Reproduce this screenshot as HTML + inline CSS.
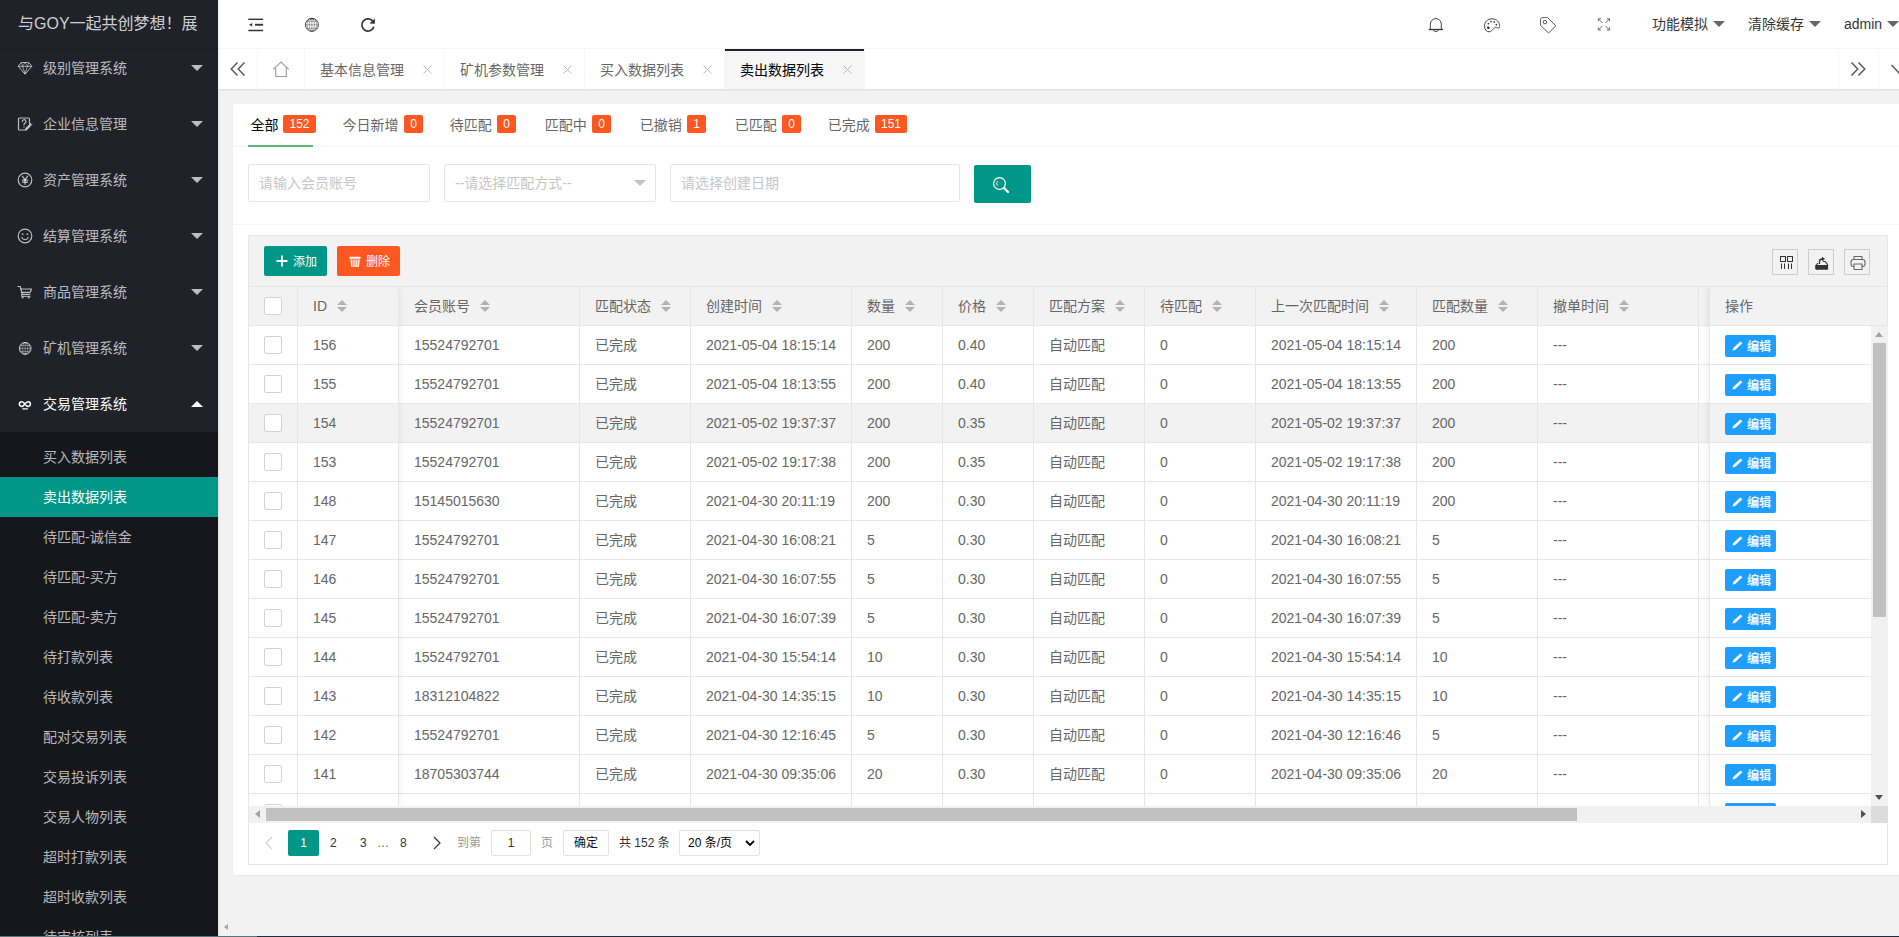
<!DOCTYPE html><html lang="zh-CN"><head><meta charset="utf-8"><title>卖出数据列表</title><style>

*{box-sizing:border-box;margin:0;padding:0}
html,body{width:1899px;height:937px;overflow:hidden}
body{position:relative;background:#f2f2f2;font-family:"Liberation Sans","Noto Sans CJK SC",sans-serif;font-size:14px;color:#666;line-height:24px}
.abs{position:absolute}
svg{display:block}
/* sidebar */
#side{position:absolute;left:0;top:0;width:218px;height:937px;background:#20222a;overflow:hidden;z-index:5;box-shadow:1px 0 2px 0 rgba(0,0,0,.08)}
#logo{position:absolute;left:0;top:0;width:218px;height:48px;background:#20222a;box-shadow:0 1px 2px 0 rgba(0,0,0,.15);z-index:3;color:rgba(255,255,255,.8);font-size:16px;line-height:48px;padding-left:18px;white-space:nowrap;overflow:hidden}
.mi{position:absolute;left:0;width:218px;height:56px;line-height:56px;color:rgba(255,255,255,.7);font-size:14px;white-space:nowrap}
.mi .ic{position:absolute;left:17px;top:20px;width:16px;height:16px}
.mi .tx{position:absolute;left:43px;top:0}
.mi .ar{position:absolute;left:191px;top:25px;width:0;height:0;border:6px solid transparent;border-top-color:rgba(255,255,255,.7)}
.mi.open{color:#fff}
.mi.open .ar{top:19px;border-top-color:transparent;border-bottom-color:#fff}
#sub{position:absolute;left:0;top:432px;width:218px;height:600px;background:rgba(0,0,0,.3)}
.si{position:absolute;left:0;width:218px;height:40px;line-height:40px;padding-left:43px;color:rgba(255,255,255,.7);font-size:14px;white-space:nowrap}
.si.on{background:#009688;color:#fff}
/* header */
#hd{position:absolute;left:218px;top:0;width:1701px;height:49px;background:#fff;border-bottom:1px solid #f6f6f6;z-index:4}
#hd .hi{position:absolute;top:0}
.ht{position:absolute;top:0;height:48px;line-height:48px;font-size:14px;color:#333;white-space:nowrap}
.ha{position:absolute;top:21px;width:0;height:0;border:6px solid transparent;border-top-color:#666}
/* tabs */
#tabs{position:absolute;left:218px;top:49px;width:1701px;height:40px;background:#fff;box-shadow:0 1px 2px 0 rgba(0,0,0,.1);z-index:3}
.tb{position:absolute;top:0;height:40px;line-height:40px;border-right:1px solid #f6f6f6;font-size:14px;color:#666;white-space:nowrap}
.tb .tt{position:absolute;left:15px;top:1px}
.tb .cl{position:absolute;left:118px;top:16px;width:9px;height:9px}
.tb.on{background:#f6f6f6;color:#000}
.tb.on:before{content:"";position:absolute;left:0;top:0;width:100%;height:2px;background:#20222a}
.tctl{position:absolute;top:0;width:40px;height:40px;background:#fff}


#card{position:absolute;left:233px;top:104px;width:1700px;height:771px;background:#fff;border-radius:2px;box-shadow:0 1px 2px 0 rgba(0,0,0,.05)}
.ln{position:absolute;left:233px;width:1700px;height:1px;background:#f6f6f6}
.ft{position:absolute;top:105px;height:41px;line-height:41px;font-size:14px;color:#666;white-space:nowrap}
.ft.on{color:#000}
.bd{position:absolute;top:115px;height:18px;line-height:18px;font-size:12px;color:#fff;background:#ff5722;border-radius:2px;text-align:center}
.inp{position:absolute;top:164px;height:38px;border:1px solid #e6e6e6;border-radius:2px;background:#fff;line-height:36px;padding-left:10px;color:#c6c6c6;font-size:14px;white-space:nowrap}
#tv{position:absolute;left:248px;top:235px;width:1640px;height:630px;border:1px solid #e6e6e6;border-right:none;background:#fff;overflow:hidden}
.rb{position:absolute;left:1638px;width:1px;background:#e6e6e6;z-index:6}
#tool{position:absolute;left:0;top:0;width:1638px;height:51px;background:#f2f2f2;border-bottom:1px solid #e6e6e6}
.btn{position:absolute;top:10px;height:30px;line-height:30px;width:63px;border-radius:2px;color:#fff;font-size:12px;white-space:nowrap}
.tbx{position:absolute;top:13px;width:26px;height:26px;border:1px solid #ccc;color:#333}
.row{position:absolute;left:0;height:39px;width:1700px;display:flex;white-space:nowrap}
.c{flex:none;height:39px;border-right:1px solid #e6e6e6;border-bottom:1px solid #e6e6e6;padding-left:15px;line-height:38px;font-size:14px;color:#666;overflow:hidden;position:relative}
.hd .c{background:#f2f2f2}
.row.hv .c{background:#f2f2f2}
.cb{position:absolute;left:15px;top:10px;width:18px;height:18px;border:1px solid #d2d2d2;border-radius:2px;background:#fff}
.so{display:inline-block;position:relative;width:10px;height:20px;margin-left:10px;vertical-align:middle;top:0}
.so:before,.so:after{content:"";position:absolute;left:0;width:0;height:0;border:5px solid transparent}
.so:before{top:-2px;border-bottom-color:#b2b2b2}
.so:after{top:10px;border-top-color:#b2b2b2}
#fr{position:absolute;left:1460px;top:51px;width:179px;height:519px;border-left:1px solid #e6e6e6;box-shadow:-1px 0 8px rgba(0,0,0,.08);background:#fff;clip-path:inset(0 0 0 -12px)}
#fl{position:absolute;left:0;top:51px;width:150px;height:519px;box-shadow:0 -1px 8px rgba(0,0,0,.08);pointer-events:none;clip-path:inset(0 -12px 0 0)}
.fc{position:absolute;left:0;height:39px;border-bottom:1px solid #e6e6e6;background:#fff}
.eb{position:absolute;left:15px;top:9px;width:51px;height:22px;line-height:22px;background:#1e9fff;border-radius:2px;color:#fff;font-size:12px;white-space:nowrap}
.pg{position:absolute;top:595px;height:26px;line-height:26px;font-size:12px;color:#333;white-space:nowrap}

</style></head><body>
<div id="side">
<div class="mi" style="top:40px"><span class="ic"><svg width="16" height="16" viewBox="0 0 16 16" fill="none" stroke="currentColor" stroke-width="1" stroke-linejoin="round"><path d="M4.200 2.600h7.600l3 3.700L8 14.200 1.200 6.300z"/><path d="M1.500 6.300h13" stroke-width=".9"/><path d="M5.600 6.300 8 13.600l2.400-7.300" stroke-width=".8"/><path d="M4.200 2.600l1.400 3.700L8 2.600l2.400 3.700 1.400-3.700" stroke-width=".7" stroke-opacity=".8"/></svg></span><span class="tx">级别管理系统</span><i class="ar"></i></div>
<div class="mi" style="top:96px"><span class="ic"><svg width="16" height="16" viewBox="0 0 16 16" fill="none" stroke="currentColor" stroke-width="1.2" stroke-linecap="round" stroke-linejoin="round" ><path d="M9 14H2.5a1 1 0 0 1-1-1V3a1 1 0 0 1 1-1h9a1 1 0 0 1 1 1v4.5"/><path d="M5.2 5.6a1.9 1.9 0 1 1 2.6 1.8c-.6.3-.8.7-.8 1.4"/><path d="M7 10.9v.2"/><path d="M14.6 8.8l-4.4 4.6-1.6.5.4-1.7 4.4-4.6z" fill="currentColor" stroke-width=".8"/></svg></span><span class="tx">企业信息管理</span><i class="ar"></i></div>
<div class="mi" style="top:152px"><span class="ic"><svg width="16" height="16" viewBox="0 0 16 16" fill="none" stroke="currentColor" stroke-width="1.2" stroke-linecap="round" stroke-linejoin="round" ><circle cx="8" cy="8" r="6.8"/><path d="M5.4 4.2 8 7.8l2.6-3.6"/><path d="M8 7.8v4.4"/><path d="M5.4 8.2h5.2"/><path d="M5.4 10.2h5.2"/></svg></span><span class="tx">资产管理系统</span><i class="ar"></i></div>
<div class="mi" style="top:208px"><span class="ic"><svg width="16" height="16" viewBox="0 0 16 16" fill="none" stroke="currentColor" stroke-width="1.2" stroke-linecap="round" stroke-linejoin="round" ><circle cx="8" cy="8" r="6.8"/><path d="M4.8 9.4a3.4 3.4 0 0 0 6.4 0"/><circle cx="5.6" cy="6.2" r=".9" fill="currentColor" stroke="none"/><circle cx="10.4" cy="6.2" r=".9" fill="currentColor" stroke="none"/></svg></span><span class="tx">结算管理系统</span><i class="ar"></i></div>
<div class="mi" style="top:264px"><span class="ic"><svg width="16" height="16" viewBox="0 0 16 16" fill="none" stroke="currentColor" stroke-width="1.2" stroke-linecap="round" stroke-linejoin="round" ><path d="M1 2.5h2.2l2 7.8h7.6"/><path d="M4 5h10.5l-1.3 3.4H5"/><path d="M5.2 10.3l-.8 2h8.8" stroke-width="1"/><circle cx="5.6" cy="13.6" r="1" fill="currentColor" stroke="none"/><circle cx="11.8" cy="13.6" r="1" fill="currentColor" stroke="none"/></svg></span><span class="tx">商品管理系统</span><i class="ar"></i></div>
<div class="mi" style="top:320px"><span class="ic"><svg width="16" height="17" viewBox="0 0 16 17" fill="none" stroke="currentColor"><circle cx="8.200" cy="8.400" r="5.900" stroke-width="1"/><g stroke-width=".7" stroke-opacity=".75"><ellipse cx="8.200" cy="8.400" rx="2.500" ry="5.900"/><path d="M8.200 2.500v11.800"/><path d="M2.300 8.400h11.800"/><path d="M3.200 5.400h10"/><path d="M3.200 11.400h10"/><ellipse cx="8.200" cy="8.400" rx="4.600" ry="5.900" stroke-opacity=".6"/></g></svg></span><span class="tx">矿机管理系统</span><i class="ar"></i></div>
<div class="mi open" style="top:376px"><span class="ic"><svg width="16" height="16" viewBox="0 0 16 16" fill="none" stroke="currentColor" stroke-linecap="round"><path d="M7.900 8C6.900 6.600 5.900 5.800 4.700 5.800a2.300 2.300 0 0 0 0 4.600C5.900 10.400 6.900 9.500 7.900 8s2.100-2.200 3.200-2.200a2.300 2.300 0 0 1 0 4.600c-.8 0-1.500-.4-2.100-1" stroke-width="1.500"/><path d="M5.800 12.900h4.600" stroke-width="1.100"/></svg></span><span class="tx">交易管理系统</span><i class="ar"></i></div>
<div id="sub">
<div class="si" style="top:5px">买入数据列表</div>
<div class="si on" style="top:45px">卖出数据列表</div>
<div class="si" style="top:85px">待匹配-诚信金</div>
<div class="si" style="top:125px">待匹配-买方</div>
<div class="si" style="top:165px">待匹配-卖方</div>
<div class="si" style="top:205px">待打款列表</div>
<div class="si" style="top:245px">待收款列表</div>
<div class="si" style="top:285px">配对交易列表</div>
<div class="si" style="top:325px">交易投诉列表</div>
<div class="si" style="top:365px">交易人物列表</div>
<div class="si" style="top:405px">超时打款列表</div>
<div class="si" style="top:445px">超时收款列表</div>
<div class="si" style="top:485px">待审核列表</div>
</div>
<div id="logo">与GOY一起共创梦想！展</div>
</div>
<div id="hd">
<span class="hi" style="left:30px;top:17px"><svg width="16" height="16" viewBox="0 0 16 16" fill="none" stroke="#333"><path d="M.3 2.300h14.800" stroke-width="1.400"/><path d="M7 7.750h8.100" stroke-width="1.900"/><path d="M.3 13.500h14.800" stroke-width="1.500"/><path d="M4.200 5.900v3.700L1 7.750z" fill="#333" stroke="none"/></svg></span>
<span class="hi" style="left:86px;top:17px"><svg width="16" height="16" viewBox="0 0 16 16" fill="none" stroke="#333"><circle cx="7.900" cy="7.800" r="6.500" stroke-width="1" stroke-opacity=".85"/><g stroke-width=".7" stroke-opacity=".6"><ellipse cx="7.900" cy="7.800" rx="2.600" ry="6.500"/><ellipse cx="7.900" cy="7.800" rx="4.900" ry="6.500"/><path d="M7.900 1.300v13"/><path d="M1.400 7.800h13"/><path d="M2.600 4.300h10.600"/><path d="M2.600 11.300h10.600"/></g><path d="M5.800 1.900h4.200" stroke-width="1" stroke-opacity=".8"/></svg></span>
<span class="hi" style="left:142px;top:17px"><svg width="16" height="16" viewBox="0 0 16 16" fill="none" stroke="#333"><path d="M13.610 10.380A6.100 6.100 0 1 1 12.240 3.610" stroke-width="1.700" stroke-linecap="round"/><path d="M14.900 1.500v5.250L9.400 6.600z" fill="#333" stroke="none"/></svg></span>
<span class="hi" style="left:1210px;top:17px"><svg width="16" height="16" viewBox="0 0 16 16" fill="none" stroke="#444" stroke-width="1"><path d="M.7 12.500h14.200" stroke="#333" stroke-width="1.300"/><path d="M2.300 12.500V7.200a5.500 5.600 0 0 1 11 0v5.300"/><path d="M7.800 1.600V.8"/><path d="M5.300 12.900a2.600 2.400 0 0 0 5 0"/></svg></span>
<span class="hi" style="left:1266px;top:17px"><svg width="16" height="16" viewBox="0 0 16 16" fill="none" stroke="#444" stroke-width="1"><path d="M8 1.800C3.500 1.800.5 5.200.5 9c0 3.500 2.200 5.800 4.600 5.800 2.200 0 3-1.800 4.500-3.300 1.300-1.300 2.700-1.500 3.900-.7 1.300.8 2.300.2 2.300-1.500C15.800 5.200 12.500 1.800 8 1.800z"/><circle cx="4.300" cy="10.700" r="1.250" fill="#222" stroke="none"/><circle cx="4.400" cy="6.600" r=".85" fill="#333" stroke="none"/><circle cx="7" cy="4.500" r=".85" fill="#333" stroke="none"/><circle cx="10.300" cy="4.900" r=".85" fill="#333" stroke="none"/><circle cx="12.400" cy="7.700" r=".85" fill="#333" stroke="none"/></svg></span>
<span class="hi" style="left:1322px;top:17px"><svg width="17" height="17" viewBox="0 0 17 17" fill="none" stroke="#555" stroke-width="1" stroke-linejoin="round"><path d="M.5 2.300 1.900.5 7.200.2l8.600 8.600L8.600 16 .3 8.200z"/><circle cx="4.900" cy="5.100" r="1.700"/></svg></span>
<span class="hi" style="left:1378px;top:16px"><svg width="16" height="16" viewBox="0 0 16 16" fill="none" stroke="#666" stroke-width=".95"><path d="M2.300 5.400V2.800H4.900"/><path d="M2.300 2.800l4.200 4.200"/><path d="M10.900 2.800h2.600v2.600"/><path d="M13.500 2.800 9.300 7"/><path d="M2.300 11.400v2.600H4.900"/><path d="M2.300 14l4.200-4.200"/><path d="M10.900 14h2.600v-2.600"/><path d="M13.500 14 9.300 9.800"/></svg></span>
<span class="ht" style="left:1434px">功能模拟</span><i class="ha" style="left:1495px"></i>
<span class="ht" style="left:1530px">清除缓存</span><i class="ha" style="left:1591px"></i>
<span class="ht" style="left:1626px">admin</span><i class="ha" style="left:1669px"></i>
</div>
<div id="tabs">
<div class="tctl" style="left:0;border-right:1px solid #f6f6f6"><svg class="abs" style="left:11px;top:12px" width="18" height="16" viewBox="0 0 18 16" fill="none" stroke="#555" stroke-width="1.4"><path d="M8.500 1.500 2.200 8l6.300 6.500"/><path d="M15.500 1.500 9.200 8l6.300 6.500"/></svg></div>
<div class="tb" style="left:40px;width:47px"><svg class="abs" style="left:14px;top:12px" width="18" height="17" viewBox="0 0 18 17" fill="none" stroke="#999" stroke-width="1.1" stroke-linejoin="round"><path d="M1.200 8.400 9 1.200l7.800 7.200"/><path d="M3.700 6.800v8.700h10.600V6.800"/></svg></div>
<div class="tb" style="left:87px;width:140px"><span class="tt">基本信息管理</span><svg class="cl" viewBox="0 0 9 9" stroke="#bbb" stroke-width="1"><path d="M.5.5l8 8M8.500.5l-8 8"/></svg></div>
<div class="tb" style="left:227px;width:140px"><span class="tt">矿机参数管理</span><svg class="cl" viewBox="0 0 9 9" stroke="#bbb" stroke-width="1"><path d="M.5.5l8 8M8.500.5l-8 8"/></svg></div>
<div class="tb" style="left:367px;width:140px"><span class="tt">买入数据列表</span><svg class="cl" viewBox="0 0 9 9" stroke="#bbb" stroke-width="1"><path d="M.5.5l8 8M8.500.5l-8 8"/></svg></div>
<div class="tb on" style="left:507px;width:140px"><span class="tt">卖出数据列表</span><svg class="cl" viewBox="0 0 9 9" stroke="#bbb" stroke-width="1"><path d="M.5.5l8 8M8.500.5l-8 8"/></svg></div>
<div class="tctl" style="left:1620px;border-left:1px solid #f6f6f6"><svg class="abs" style="left:10px;top:12px" width="18" height="16" viewBox="0 0 18 16" fill="none" stroke="#555" stroke-width="1.4"><path d="M2.500 1.500 8.800 8l-6.300 6.500"/><path d="M9.500 1.500 15.800 8l-6.300 6.500"/></svg></div>
<div class="tctl" style="left:1660px;border-left:1px solid #f6f6f6"><svg class="abs" style="left:11px;top:14px" width="18" height="12" viewBox="0 0 18 12" fill="none" stroke="#555" stroke-width="1.4"><path d="M1.500 2 9 10l7.500-8"/></svg></div>
</div>
<div id="card"></div>
<div class="ln" style="top:146px"></div>
<div class="ln" style="top:224px"></div>
<span class="ft on" style="left:250.5px">全部</span><span class="bd" style="left:283px;width:33px">152</span>
<span class="ft" style="left:342.6px">今日新增</span><span class="bd" style="left:404px;width:19px">0</span>
<span class="ft" style="left:449.8px">待匹配</span><span class="bd" style="left:497px;width:19px">0</span>
<span class="ft" style="left:544.8px">匹配中</span><span class="bd" style="left:592px;width:19px">0</span>
<span class="ft" style="left:639.8px">已撤销</span><span class="bd" style="left:687px;width:19px">1</span>
<span class="ft" style="left:734.8px">已匹配</span><span class="bd" style="left:782px;width:19px">0</span>
<span class="ft" style="left:827.8px">已完成</span><span class="bd" style="left:875px;width:32px">151</span>
<div class="abs" style="left:248px;top:145px;width:65px;height:2px;background:#5fb878"></div>
<div class="inp" style="left:248px;width:182px">请输入会员账号</div>
<div class="inp" style="left:444px;width:212px">--请选择匹配方式--<i class="abs" style="right:9px;top:15px;border:6px solid transparent;border-top-color:#c2c2c2"></i></div>
<div class="inp" style="left:670px;width:290px">请选择创建日期</div>
<div class="abs" style="left:974px;top:165px;width:57px;height:38px;background:#009688;border-radius:2px"><svg class="abs" style="left:18px;top:11px" width="18" height="18" viewBox="0 0 18 18" fill="none" stroke="#fff" stroke-width="1.250" stroke-linecap="round"><circle cx="7.500" cy="7.500" r="5.900"/><path d="M12 12l4 4" stroke-width="2.400"/><path d="M5.200 9.300a3 3 0 0 1 0-3.600" stroke-width="1"/></svg></div>
<div id="tv">
<div id="tool">
<div class="btn" style="left:15px;background:#009688"><svg class="abs" style="left:12px;top:9px" width="12" height="12" viewBox="0 0 12 12" stroke="#fff" stroke-width="1.800"><path d="M6 .5v11M.5 6h11"/></svg><span class="abs" style="left:29px;top:1px">添加</span></div>
<div class="btn" style="left:88px;background:#ff5722"><svg class="abs" style="left:12px;top:9px" width="12" height="13" viewBox="0 0 12 13" fill="none" stroke="#fff" stroke-linecap="round"><path d="M1.200 2.700h9.600" stroke-width="1.900"/><path d="M2 4.600l.5 6.700h7l.5-6.700" stroke-width="1.100" fill="#fff" fill-opacity=".35"/><path d="M4.300 5v5.800M6 5v5.800M7.700 5v5.800" stroke-width=".8" stroke-opacity=".9"/></svg><span class="abs" style="left:29px;top:1px">删除</span></div>
<div class="tbx" style="left:1523px"><svg class="abs" style="left:7px;top:6px" width="14" height="14" viewBox="0 0 14 14" fill="none" stroke="#333" stroke-width="1"><rect x=".5" y=".5" width="5" height="5"/><rect x="7.500" y=".5" width="5" height="5"/><path d="M1.500 7.500V13M4.500 7.500V13M8.500 7.500V13M11.500 7.500V13"/></svg></div>
<div class="tbx" style="left:1559px"><svg class="abs" style="left:6px;top:6px" width="14" height="14" viewBox="0 0 14 14" fill="none" stroke="#333" stroke-width="1.100"><path d="M1 13h11.500V8.500L10 5.500H8"/><path d="M1 13V9.500l2-2.500" /><path d="M1 9.500h11.500v3.500H1z" fill="#333"/><path d="M4.500 8V5.500C4.500 4 5.500 3 7.500 3" stroke-width="1.300"/><path d="M7 .8 10 3 7 5.200z" fill="#333" stroke="none"/></svg></div>
<div class="tbx" style="left:1595px"><svg class="abs" style="left:5px;top:5px" width="16" height="16" viewBox="0 0 16 16" fill="none" stroke="#666" stroke-width="1.100" stroke-linejoin="round"><path d="M4 4.500V1.500h8v3"/><rect x="1" y="4.500" width="14" height="7" rx="2.500"/><path d="M4 9h8v5.500H4z" fill="#f2f2f2"/></svg></div>
</div>
<div class="row hd" style="top:51px">
<div class="c" style="width:49px"><i class="cb"></i></div>
<div class="c" style="width:101px">ID<i class="so"></i></div>
<div class="c" style="width:181px">会员账号<i class="so"></i></div>
<div class="c" style="width:111px">匹配状态<i class="so"></i></div>
<div class="c" style="width:161px">创建时间<i class="so"></i></div>
<div class="c" style="width:91px">数量<i class="so"></i></div>
<div class="c" style="width:91px">价格<i class="so"></i></div>
<div class="c" style="width:111px">匹配方案<i class="so"></i></div>
<div class="c" style="width:111px">待匹配<i class="so"></i></div>
<div class="c" style="width:161px">上一次匹配时间<i class="so"></i></div>
<div class="c" style="width:121px">匹配数量<i class="so"></i></div>
<div class="c" style="width:161px">撤单时间<i class="so"></i></div>
<div class="c" style="width:200px">备注<i class="so"></i></div>
</div>
<div class="abs" style="left:0;top:90px;width:1622px;height:480px;overflow:hidden">
<div class="row" style="top:0px">
<div class="c" style="width:49px"><i class="cb"></i></div>
<div class="c" style="width:101px">156</div>
<div class="c" style="width:181px">15524792701</div>
<div class="c" style="width:111px">已完成</div>
<div class="c" style="width:161px">2021-05-04 18:15:14</div>
<div class="c" style="width:91px">200</div>
<div class="c" style="width:91px">0.40</div>
<div class="c" style="width:111px">自动匹配</div>
<div class="c" style="width:111px">0</div>
<div class="c" style="width:161px">2021-05-04 18:15:14</div>
<div class="c" style="width:121px">200</div>
<div class="c" style="width:161px">---</div>
<div class="c" style="width:200px"></div>
</div>
<div class="row" style="top:39px">
<div class="c" style="width:49px"><i class="cb"></i></div>
<div class="c" style="width:101px">155</div>
<div class="c" style="width:181px">15524792701</div>
<div class="c" style="width:111px">已完成</div>
<div class="c" style="width:161px">2021-05-04 18:13:55</div>
<div class="c" style="width:91px">200</div>
<div class="c" style="width:91px">0.40</div>
<div class="c" style="width:111px">自动匹配</div>
<div class="c" style="width:111px">0</div>
<div class="c" style="width:161px">2021-05-04 18:13:55</div>
<div class="c" style="width:121px">200</div>
<div class="c" style="width:161px">---</div>
<div class="c" style="width:200px"></div>
</div>
<div class="row hv" style="top:78px">
<div class="c" style="width:49px"><i class="cb"></i></div>
<div class="c" style="width:101px">154</div>
<div class="c" style="width:181px">15524792701</div>
<div class="c" style="width:111px">已完成</div>
<div class="c" style="width:161px">2021-05-02 19:37:37</div>
<div class="c" style="width:91px">200</div>
<div class="c" style="width:91px">0.35</div>
<div class="c" style="width:111px">自动匹配</div>
<div class="c" style="width:111px">0</div>
<div class="c" style="width:161px">2021-05-02 19:37:37</div>
<div class="c" style="width:121px">200</div>
<div class="c" style="width:161px">---</div>
<div class="c" style="width:200px"></div>
</div>
<div class="row" style="top:117px">
<div class="c" style="width:49px"><i class="cb"></i></div>
<div class="c" style="width:101px">153</div>
<div class="c" style="width:181px">15524792701</div>
<div class="c" style="width:111px">已完成</div>
<div class="c" style="width:161px">2021-05-02 19:17:38</div>
<div class="c" style="width:91px">200</div>
<div class="c" style="width:91px">0.35</div>
<div class="c" style="width:111px">自动匹配</div>
<div class="c" style="width:111px">0</div>
<div class="c" style="width:161px">2021-05-02 19:17:38</div>
<div class="c" style="width:121px">200</div>
<div class="c" style="width:161px">---</div>
<div class="c" style="width:200px"></div>
</div>
<div class="row" style="top:156px">
<div class="c" style="width:49px"><i class="cb"></i></div>
<div class="c" style="width:101px">148</div>
<div class="c" style="width:181px">15145015630</div>
<div class="c" style="width:111px">已完成</div>
<div class="c" style="width:161px">2021-04-30 20:11:19</div>
<div class="c" style="width:91px">200</div>
<div class="c" style="width:91px">0.30</div>
<div class="c" style="width:111px">自动匹配</div>
<div class="c" style="width:111px">0</div>
<div class="c" style="width:161px">2021-04-30 20:11:19</div>
<div class="c" style="width:121px">200</div>
<div class="c" style="width:161px">---</div>
<div class="c" style="width:200px"></div>
</div>
<div class="row" style="top:195px">
<div class="c" style="width:49px"><i class="cb"></i></div>
<div class="c" style="width:101px">147</div>
<div class="c" style="width:181px">15524792701</div>
<div class="c" style="width:111px">已完成</div>
<div class="c" style="width:161px">2021-04-30 16:08:21</div>
<div class="c" style="width:91px">5</div>
<div class="c" style="width:91px">0.30</div>
<div class="c" style="width:111px">自动匹配</div>
<div class="c" style="width:111px">0</div>
<div class="c" style="width:161px">2021-04-30 16:08:21</div>
<div class="c" style="width:121px">5</div>
<div class="c" style="width:161px">---</div>
<div class="c" style="width:200px"></div>
</div>
<div class="row" style="top:234px">
<div class="c" style="width:49px"><i class="cb"></i></div>
<div class="c" style="width:101px">146</div>
<div class="c" style="width:181px">15524792701</div>
<div class="c" style="width:111px">已完成</div>
<div class="c" style="width:161px">2021-04-30 16:07:55</div>
<div class="c" style="width:91px">5</div>
<div class="c" style="width:91px">0.30</div>
<div class="c" style="width:111px">自动匹配</div>
<div class="c" style="width:111px">0</div>
<div class="c" style="width:161px">2021-04-30 16:07:55</div>
<div class="c" style="width:121px">5</div>
<div class="c" style="width:161px">---</div>
<div class="c" style="width:200px"></div>
</div>
<div class="row" style="top:273px">
<div class="c" style="width:49px"><i class="cb"></i></div>
<div class="c" style="width:101px">145</div>
<div class="c" style="width:181px">15524792701</div>
<div class="c" style="width:111px">已完成</div>
<div class="c" style="width:161px">2021-04-30 16:07:39</div>
<div class="c" style="width:91px">5</div>
<div class="c" style="width:91px">0.30</div>
<div class="c" style="width:111px">自动匹配</div>
<div class="c" style="width:111px">0</div>
<div class="c" style="width:161px">2021-04-30 16:07:39</div>
<div class="c" style="width:121px">5</div>
<div class="c" style="width:161px">---</div>
<div class="c" style="width:200px"></div>
</div>
<div class="row" style="top:312px">
<div class="c" style="width:49px"><i class="cb"></i></div>
<div class="c" style="width:101px">144</div>
<div class="c" style="width:181px">15524792701</div>
<div class="c" style="width:111px">已完成</div>
<div class="c" style="width:161px">2021-04-30 15:54:14</div>
<div class="c" style="width:91px">10</div>
<div class="c" style="width:91px">0.30</div>
<div class="c" style="width:111px">自动匹配</div>
<div class="c" style="width:111px">0</div>
<div class="c" style="width:161px">2021-04-30 15:54:14</div>
<div class="c" style="width:121px">10</div>
<div class="c" style="width:161px">---</div>
<div class="c" style="width:200px"></div>
</div>
<div class="row" style="top:351px">
<div class="c" style="width:49px"><i class="cb"></i></div>
<div class="c" style="width:101px">143</div>
<div class="c" style="width:181px">18312104822</div>
<div class="c" style="width:111px">已完成</div>
<div class="c" style="width:161px">2021-04-30 14:35:15</div>
<div class="c" style="width:91px">10</div>
<div class="c" style="width:91px">0.30</div>
<div class="c" style="width:111px">自动匹配</div>
<div class="c" style="width:111px">0</div>
<div class="c" style="width:161px">2021-04-30 14:35:15</div>
<div class="c" style="width:121px">10</div>
<div class="c" style="width:161px">---</div>
<div class="c" style="width:200px"></div>
</div>
<div class="row" style="top:390px">
<div class="c" style="width:49px"><i class="cb"></i></div>
<div class="c" style="width:101px">142</div>
<div class="c" style="width:181px">15524792701</div>
<div class="c" style="width:111px">已完成</div>
<div class="c" style="width:161px">2021-04-30 12:16:45</div>
<div class="c" style="width:91px">5</div>
<div class="c" style="width:91px">0.30</div>
<div class="c" style="width:111px">自动匹配</div>
<div class="c" style="width:111px">0</div>
<div class="c" style="width:161px">2021-04-30 12:16:46</div>
<div class="c" style="width:121px">5</div>
<div class="c" style="width:161px">---</div>
<div class="c" style="width:200px"></div>
</div>
<div class="row" style="top:429px">
<div class="c" style="width:49px"><i class="cb"></i></div>
<div class="c" style="width:101px">141</div>
<div class="c" style="width:181px">18705303744</div>
<div class="c" style="width:111px">已完成</div>
<div class="c" style="width:161px">2021-04-30 09:35:06</div>
<div class="c" style="width:91px">20</div>
<div class="c" style="width:91px">0.30</div>
<div class="c" style="width:111px">自动匹配</div>
<div class="c" style="width:111px">0</div>
<div class="c" style="width:161px">2021-04-30 09:35:06</div>
<div class="c" style="width:121px">20</div>
<div class="c" style="width:161px">---</div>
<div class="c" style="width:200px"></div>
</div>
<div class="row" style="top:468px">
<div class="c" style="width:49px"><i class="cb"></i></div>
<div class="c" style="width:101px">140</div>
<div class="c" style="width:181px">15524792701</div>
<div class="c" style="width:111px">已完成</div>
<div class="c" style="width:161px">2021-04-30 09:30:12</div>
<div class="c" style="width:91px">5</div>
<div class="c" style="width:91px">0.30</div>
<div class="c" style="width:111px">自动匹配</div>
<div class="c" style="width:111px">0</div>
<div class="c" style="width:161px">2021-04-30 09:30:12</div>
<div class="c" style="width:121px">5</div>
<div class="c" style="width:161px">---</div>
<div class="c" style="width:200px"></div>
</div>
</div>
<div id="fl"></div>
<div id="fr">
<div class="fc" style="top:0;width:177px;background:#f2f2f2;padding-left:15px;line-height:38px;color:#666">操作</div>
<div class="abs" style="left:0;top:39px;width:161px;height:480px;overflow:hidden">
<div class="fc" style="top:0px;width:161px"><div class="eb"><svg class="abs" style="left:7px;top:6px" width="11" height="10" viewBox="0 0 11 10"><path d="M8.400.4 10.400 2.300 3.200 8.900.5 9.500 1.200 7z" fill="#fff"/></svg><span class="abs" style="left:22px;top:1px;-webkit-text-stroke:.25px #fff">编辑</span></div></div>
<div class="fc" style="top:39px;width:161px"><div class="eb"><svg class="abs" style="left:7px;top:6px" width="11" height="10" viewBox="0 0 11 10"><path d="M8.400.4 10.400 2.300 3.200 8.900.5 9.500 1.200 7z" fill="#fff"/></svg><span class="abs" style="left:22px;top:1px;-webkit-text-stroke:.25px #fff">编辑</span></div></div>
<div class="fc" style="top:78px;width:161px;background:#f2f2f2"><div class="eb"><svg class="abs" style="left:7px;top:6px" width="11" height="10" viewBox="0 0 11 10"><path d="M8.400.4 10.400 2.300 3.200 8.900.5 9.500 1.200 7z" fill="#fff"/></svg><span class="abs" style="left:22px;top:1px;-webkit-text-stroke:.25px #fff">编辑</span></div></div>
<div class="fc" style="top:117px;width:161px"><div class="eb"><svg class="abs" style="left:7px;top:6px" width="11" height="10" viewBox="0 0 11 10"><path d="M8.400.4 10.400 2.300 3.200 8.900.5 9.500 1.200 7z" fill="#fff"/></svg><span class="abs" style="left:22px;top:1px;-webkit-text-stroke:.25px #fff">编辑</span></div></div>
<div class="fc" style="top:156px;width:161px"><div class="eb"><svg class="abs" style="left:7px;top:6px" width="11" height="10" viewBox="0 0 11 10"><path d="M8.400.4 10.400 2.300 3.200 8.900.5 9.500 1.200 7z" fill="#fff"/></svg><span class="abs" style="left:22px;top:1px;-webkit-text-stroke:.25px #fff">编辑</span></div></div>
<div class="fc" style="top:195px;width:161px"><div class="eb"><svg class="abs" style="left:7px;top:6px" width="11" height="10" viewBox="0 0 11 10"><path d="M8.400.4 10.400 2.300 3.200 8.900.5 9.500 1.200 7z" fill="#fff"/></svg><span class="abs" style="left:22px;top:1px;-webkit-text-stroke:.25px #fff">编辑</span></div></div>
<div class="fc" style="top:234px;width:161px"><div class="eb"><svg class="abs" style="left:7px;top:6px" width="11" height="10" viewBox="0 0 11 10"><path d="M8.400.4 10.400 2.300 3.200 8.900.5 9.500 1.200 7z" fill="#fff"/></svg><span class="abs" style="left:22px;top:1px;-webkit-text-stroke:.25px #fff">编辑</span></div></div>
<div class="fc" style="top:273px;width:161px"><div class="eb"><svg class="abs" style="left:7px;top:6px" width="11" height="10" viewBox="0 0 11 10"><path d="M8.400.4 10.400 2.300 3.200 8.900.5 9.500 1.200 7z" fill="#fff"/></svg><span class="abs" style="left:22px;top:1px;-webkit-text-stroke:.25px #fff">编辑</span></div></div>
<div class="fc" style="top:312px;width:161px"><div class="eb"><svg class="abs" style="left:7px;top:6px" width="11" height="10" viewBox="0 0 11 10"><path d="M8.400.4 10.400 2.300 3.200 8.900.5 9.500 1.200 7z" fill="#fff"/></svg><span class="abs" style="left:22px;top:1px;-webkit-text-stroke:.25px #fff">编辑</span></div></div>
<div class="fc" style="top:351px;width:161px"><div class="eb"><svg class="abs" style="left:7px;top:6px" width="11" height="10" viewBox="0 0 11 10"><path d="M8.400.4 10.400 2.300 3.200 8.900.5 9.500 1.200 7z" fill="#fff"/></svg><span class="abs" style="left:22px;top:1px;-webkit-text-stroke:.25px #fff">编辑</span></div></div>
<div class="fc" style="top:390px;width:161px"><div class="eb"><svg class="abs" style="left:7px;top:6px" width="11" height="10" viewBox="0 0 11 10"><path d="M8.400.4 10.400 2.300 3.200 8.900.5 9.500 1.200 7z" fill="#fff"/></svg><span class="abs" style="left:22px;top:1px;-webkit-text-stroke:.25px #fff">编辑</span></div></div>
<div class="fc" style="top:429px;width:161px"><div class="eb"><svg class="abs" style="left:7px;top:6px" width="11" height="10" viewBox="0 0 11 10"><path d="M8.400.4 10.400 2.300 3.200 8.900.5 9.500 1.200 7z" fill="#fff"/></svg><span class="abs" style="left:22px;top:1px;-webkit-text-stroke:.25px #fff">编辑</span></div></div>
<div class="fc" style="top:468px;width:161px"><div class="eb"><svg class="abs" style="left:7px;top:6px" width="11" height="10" viewBox="0 0 11 10"><path d="M8.400.4 10.400 2.300 3.200 8.900.5 9.500 1.200 7z" fill="#fff"/></svg><span class="abs" style="left:22px;top:1px;-webkit-text-stroke:.25px #fff">编辑</span></div></div>
</div>
<div class="abs" style="left:161px;top:39px;width:17px;height:480px;background:#f1f1f1"><i class="abs" style="left:4px;top:2px;border:4.500px solid transparent;border-bottom:5px solid #a3a3a3"></i><div class="abs" style="left:2px;top:17px;width:13px;height:274px;background:#c1c1c1"></div><i class="abs" style="left:4px;top:469px;border:4.500px solid transparent;border-top:5px solid #505050"></i></div>
</div>
<div class="abs" style="left:0;top:570px;width:1622px;height:17px;background:#f1f1f1"><i class="abs" style="left:2px;top:4px;border:4.500px solid transparent;border-right:5px solid #a3a3a3"></i><div class="abs" style="left:17px;top:2px;width:1311px;height:13px;background:#c1c1c1"></div><i class="abs" style="left:1612px;top:4px;border:4.500px solid transparent;border-left:5px solid #505050"></i></div>
<div class="abs" style="left:1622px;top:570px;width:17px;height:17px;background:#dcdcdc"></div>
<div class="rb" style="top:0;height:90px"></div><div class="rb" style="top:587px;height:42px"></div>
<svg class="abs" style="left:15px;top:600px" width="10" height="14" viewBox="0 0 10 14" fill="none" stroke="#d2d2d2" stroke-width="1.200"><path d="M8 1 2 7l6 6"/></svg>
<span class="pg" style="left:39px;width:31px;background:#009688;color:#fff;text-align:center;border-radius:2px;top:594px">1</span>
<span class="pg" style="left:81px;top:594px">2</span>
<span class="pg" style="left:111px;top:594px">3</span>
<span class="pg" style="left:128px;top:594px;color:#666;letter-spacing:.5px">…</span>
<span class="pg" style="left:151px;top:594px">8</span>
<svg class="abs" style="left:183px;top:600px" width="10" height="14" viewBox="0 0 10 14" fill="none" stroke="#333" stroke-width="1.200"><path d="M2 1l6 6-6 6"/></svg>
<span class="pg" style="left:208px;top:594px;color:#999">到第</span>
<span class="pg" style="left:242px;top:594px;width:40px;border:1px solid #e2e2e2;border-radius:2px;text-align:center;line-height:24px">1</span>
<span class="pg" style="left:292px;top:594px;color:#999">页</span>
<span class="pg" style="left:314px;top:594px;width:46px;border:1px solid #e2e2e2;border-radius:2px;text-align:center;line-height:24px;color:#111">确定</span>
<span class="pg" style="left:370px;top:594px">共 152 条</span>
<span class="pg" style="left:430px;top:594px;width:81px;border:1px solid #e2e2e2;border-radius:2px;padding-left:8px;line-height:24px;color:#000">20 条/页<svg class="abs" style="right:4px;top:9px" width="10" height="7" viewBox="0 0 10 7" fill="none" stroke="#000" stroke-width="1.800"><path d="M1 1l4 4 4-4"/></svg></span>
</div>
<i class="abs" style="left:224px;top:924px;border:3.500px solid transparent;border-right:4px solid #a3a3a3;border-left-width:0"></i>
<div class="abs" style="left:0;top:936px;width:1899px;height:1px;background:#1f2d3d;z-index:9"></div><div class="abs" style="left:0;top:936px;width:257px;height:1px;background:#5a7377;z-index:9"></div>
</body></html>
